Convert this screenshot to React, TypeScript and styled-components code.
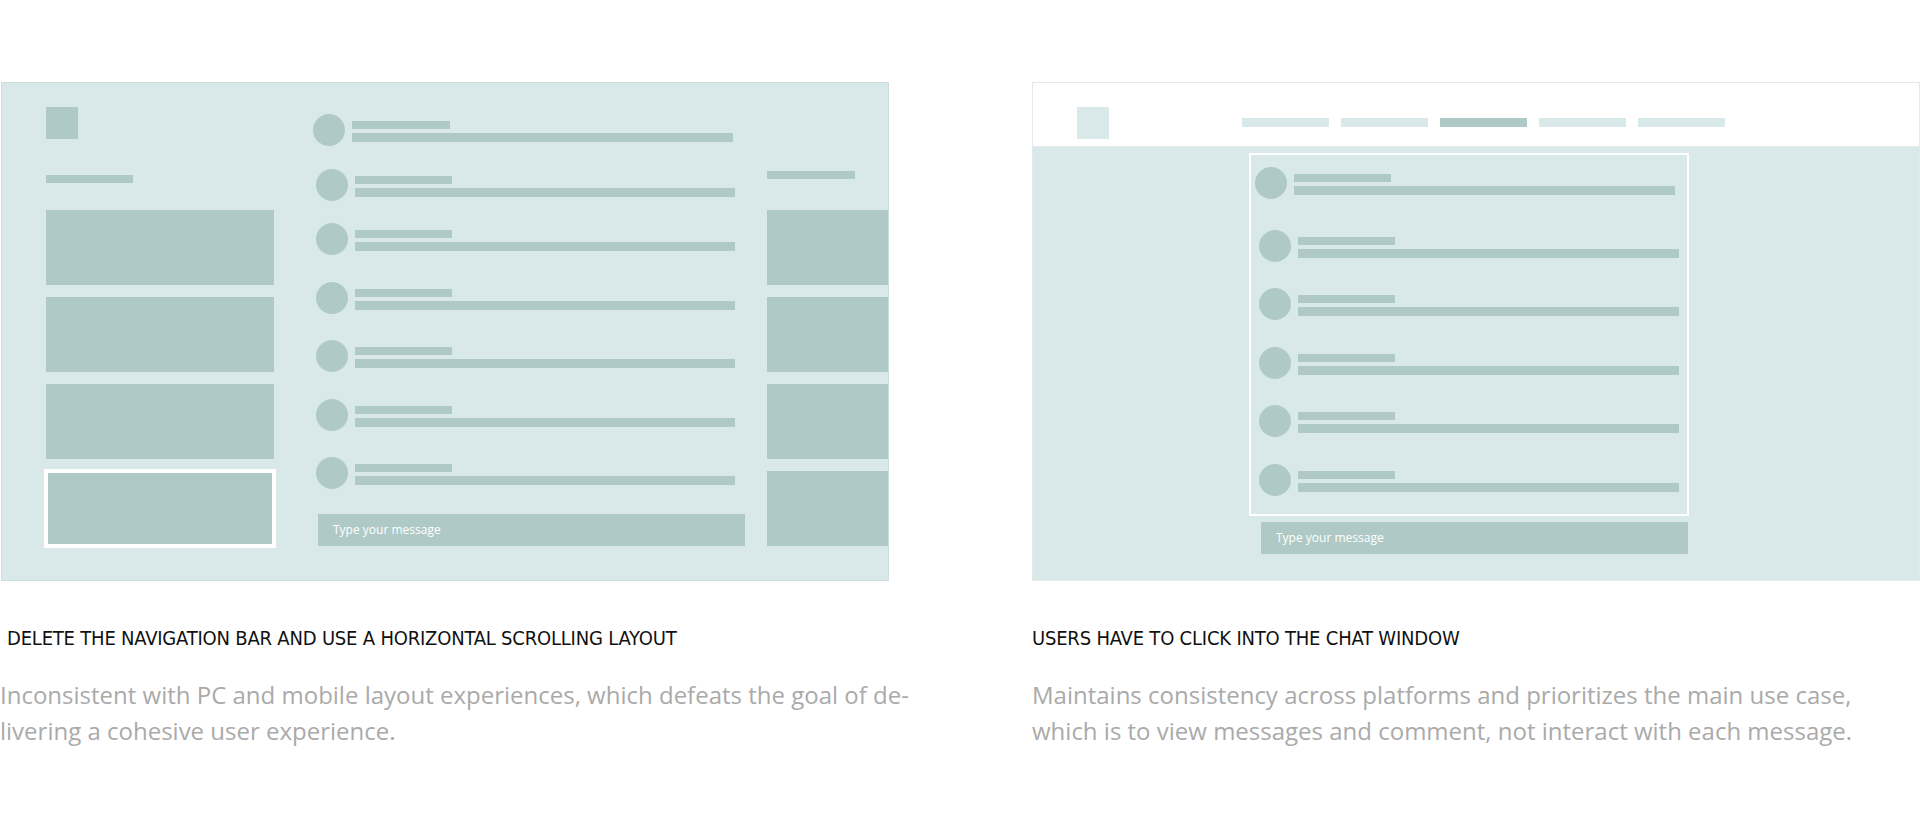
import React from "react";
import styled, { createGlobalStyle } from "styled-components";

const LIGHT = "#d9e8e8";
const DARK = "#afcac6";

const Global = createGlobalStyle`
  html, body { margin: 0; padding: 0; background: #ffffff; }
  body { font-family: "Open Sans", "Liberation Sans", sans-serif; }
  * { box-sizing: border-box; }
`;

const Page = styled.div`
  width: 1920px;
  height: 820px;
  overflow: hidden;
  padding: 82px 0 0 1px;
  display: grid;
  grid-template-columns: 888px 888px;
  column-gap: 143px;
  align-items: start;
`;

const Column = styled.section`
  display: flex;
  flex-direction: column;
  min-width: 0;
`;

const Frame = styled.div<{ $outline: string }>`
  width: 888px;
  height: 499px;
  border: 1px solid ${(p) => p.$outline};
  background: ${LIGHT};
  overflow: hidden;
  display: flex;
  flex-direction: column;
`;

/* ---------- left mock: horizontal scrolling ---------- */

const ScrollBody = styled.div`
  display: flex;
  align-items: flex-start;
  padding-left: 44px;
  height: 100%;
`;

const Sidebar = styled.div<{ $top: number; $barGap: number }>`
  flex: 0 0 228px;
  display: flex;
  flex-direction: column;
  padding-top: ${(p) => p.$top}px;
  & > :nth-child(2) { margin-top: ${(p) => p.$barGap}px; }
`;

const LogoBlock = styled.div<{ $tone: string }>`
  width: 32px;
  height: 32px;
  background: ${(p) => p.$tone};
`;

const Bar = styled.div<{ $w: number; $h?: number; $tone?: string }>`
  width: ${(p) => p.$w}px;
  height: ${(p) => p.$h ?? 8}px;
  background: ${(p) => p.$tone ?? DARK};
  flex: 0 0 auto;
`;

const CardStack = styled.div<{ $top: number }>`
  display: flex;
  flex-direction: column;
  gap: 12px;
  margin-top: ${(p) => p.$top}px;
`;

const Card = styled.div<{ $selected?: boolean }>`
  width: 228px;
  height: 75px;
  background: ${DARK};
  flex: 0 0 auto;
  ${(p) =>
    p.$selected &&
    `box-shadow: 0 0 0 2px #ffffff, inset 0 0 0 2px #ffffff;`}
`;

const ChatColumn = styled.div<{ $left: number; $top: number; $width: number }>`
  flex: 0 0 ${(p) => p.$width}px;
  margin-left: ${(p) => p.$left}px;
  padding-top: ${(p) => p.$top}px;
  display: flex;
  flex-direction: column;
`;

const MessageRow = styled.div<{ $mt: number; $ml: number }>`
  display: flex;
  align-items: flex-start;
  margin-top: ${(p) => p.$mt}px;
  margin-left: ${(p) => p.$ml}px;
`;

const Avatar = styled.div`
  width: 32px;
  height: 32px;
  border-radius: 50%;
  background: ${DARK};
  flex: 0 0 32px;
`;

const Lines = styled.div`
  display: flex;
  flex-direction: column;
  gap: 4px;
  padding-top: 7px;
  margin-left: 7px;
`;

const InputBar = styled.div<{ $mt: number; $ml: number; $w: number }>`
  width: ${(p) => p.$w}px;
  height: 32px;
  margin-top: ${(p) => p.$mt}px;
  margin-left: ${(p) => p.$ml}px;
  background: ${DARK};
  color: #ffffff;
  font-family: "Open Sans", "Liberation Sans", sans-serif;
  font-size: 12px;
  line-height: 32px;
  padding-left: 15px;
`;

const RightRail = styled.div`
  flex: 0 0 228px;
  margin-left: 22px;
  padding-top: 88px;
  display: flex;
  flex-direction: column;
`;

/* ---------- right mock: chat window ---------- */

const Header = styled.header`
  height: 64px;
  background: #ffffff;
  border-bottom: 1px solid #e4ecec;
  display: flex;
  align-items: flex-start;
  padding: 24px 0 0 44px;
  flex: 0 0 auto;
`;

const Nav = styled.nav`
  display: flex;
  gap: 12px;
  margin-left: 133px;
  margin-top: 11px;
`;

const Content = styled.div`
  flex: 1;
  display: flex;
  flex-direction: column;
  padding: 6px 0 0 216px;
`;

const ChatWindow = styled.div`
  width: 440px;
  height: 363px;
  border: 2px solid #ffffff;
  display: flex;
  flex-direction: column;
`;

/* ---------- captions ---------- */

const Title = styled.h2<{ $indent: number }>`
  margin: 45px 0 0 ${(p) => p.$indent}px;
  font-family: "Liberation Sans Narrow", "DejaVu Sans Condensed", "Roboto Condensed", "Liberation Sans", sans-serif;
  font-stretch: condensed;
  font-weight: 400;
  font-size: 20px;
  letter-spacing: -0.2px;
  line-height: 24px;
  color: #111111;
  text-transform: uppercase;
  white-space: nowrap;
`;

const Body = styled.p<{ $indent: number }>`
  margin: 27px 0 0 ${(p) => p.$indent}px;
  font-family: "Open Sans", "Liberation Sans", sans-serif;
  font-weight: 400;
  font-size: 24px;
  line-height: 36px;
  color: #aaaaaa;
  white-space: nowrap;
`;

type RowSpec = { mt: number; ml: number; short: number; long: number };

const leftRows: RowSpec[] = [
  { mt: 0, ml: -3, short: 98, long: 381 },
  { mt: 23, ml: 0, short: 97, long: 380 },
  { mt: 22, ml: 0, short: 97, long: 380 },
  { mt: 26.5, ml: 0, short: 97, long: 380 },
  { mt: 26.5, ml: 0, short: 97, long: 380 },
  { mt: 26.5, ml: 0, short: 97, long: 380 },
  { mt: 26.5, ml: 0, short: 97, long: 380 },
];

const rightRows: RowSpec[] = [
  { mt: 12, ml: 4, short: 97, long: 381 },
  { mt: 30.5, ml: 8, short: 97, long: 381 },
  { mt: 26.5, ml: 8, short: 97, long: 381 },
  { mt: 26.5, ml: 8, short: 97, long: 381 },
  { mt: 26.5, ml: 8, short: 97, long: 381 },
  { mt: 26.5, ml: 8, short: 97, long: 381 },
];

function Rows({ rows }: { rows: RowSpec[] }) {
  return (
    <>
      {rows.map((r, i) => (
        <MessageRow key={i} $mt={r.mt} $ml={r.ml}>
          <Avatar />
          <Lines>
            <Bar $w={r.short} $h={8} />
            <Bar $w={r.long} $h={9} />
          </Lines>
        </MessageRow>
      ))}
    </>
  );
}

const navItems = [false, false, true, false, false];

export default function App() {
  return (
    <>
      <Global />
      <Page>
        <Column>
          <Frame $outline="#cddede">
            <ScrollBody>
              <Sidebar $top={24} $barGap={36}>
                <LogoBlock $tone={DARK} />
                <Bar $w={87} $h={8} />
                <CardStack $top={27}>
                  <Card />
                  <Card />
                  <Card />
                  <Card $selected />
                </CardStack>
              </Sidebar>
              <ChatColumn $left={42} $top={31} $width={429}>
                <Rows rows={leftRows} />
                <InputBar $mt={25} $ml={2} $w={427}>
                  Type your message
                </InputBar>
              </ChatColumn>
              <RightRail>
                <Bar $w={88} $h={8} />
                <CardStack $top={31}>
                  <Card />
                  <Card />
                  <Card />
                  <Card />
                </CardStack>
              </RightRail>
            </ScrollBody>
          </Frame>
          <Title $indent={6}>Delete the navigation bar and use a horizontal scrolling layout</Title>
          <Body $indent={-1}>
            Inconsistent with PC and mobile layout experiences, which defeats the goal of de-
            <br />
            livering a cohesive user experience.
          </Body>
        </Column>
        <Column>
          <Frame $outline="#e3e8e8">
            <Header>
              <LogoBlock $tone={LIGHT} />
              <Nav>
                {navItems.map((active, i) => (
                  <Bar key={i} $w={87} $h={9} $tone={active ? DARK : LIGHT} />
                ))}
              </Nav>
            </Header>
            <Content>
              <ChatWindow>
                <Rows rows={rightRows} />
              </ChatWindow>
              <InputBar $mt={6} $ml={12} $w={427}>
                Type your message
              </InputBar>
            </Content>
          </Frame>
          <Title $indent={0}>Users have to click into the chat window</Title>
          <Body $indent={0}>
            Maintains consistency across platforms and prioritizes the main use case,
            <br />
            which is to view messages and comment, not interact with each message.
          </Body>
        </Column>
      </Page>
    </>
  );
}
